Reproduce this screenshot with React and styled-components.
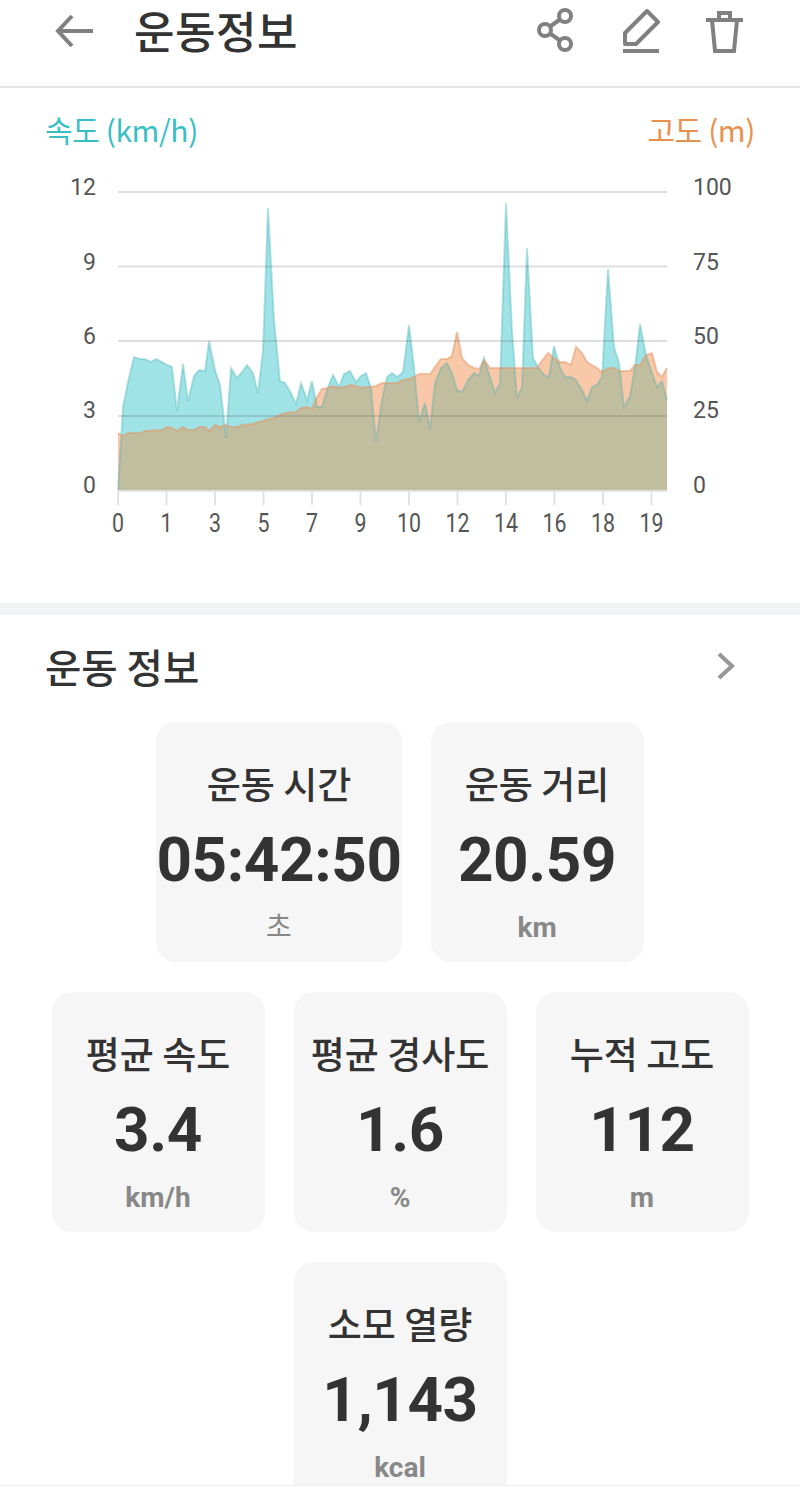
import React from 'react';
import styled, { createGlobalStyle } from 'styled-components';

const GlobalStyle = createGlobalStyle`
  html, body {
    margin: 0;
    padding: 0;
    background-color: #ffffff;
    overflow: hidden;
  }
  body {
    font-family: 'Noto Sans CJK KR', 'Noto Sans', sans-serif;
  }
`;

const Page = styled.div`
  width: 800px;
  height: 1511px;
  display: flex;
  flex-direction: column;
  overflow: hidden;
`;

const Content = styled.main`
  height: 1485px;
  flex-shrink: 0;
  overflow: hidden;
`;

const BottomEdge = styled.div`
  flex: 1;
  border-top: 1px solid #eeeeee;
`;

const Header = styled.header`
  height: 62px;
  padding: 0 55px 24px;
  display: flex;
  align-items: center;
  border-bottom: 2px solid #e4e4e4;
`;

const Title = styled.h1`
  margin: 0 0 2px 39px;
  font-size: 44px;
  font-weight: 500;
  letter-spacing: 0.5px;
  color: #333333;
  line-height: 54px;
`;

const Actions = styled.div`
  margin-left: auto;
  display: flex;
  gap: 44px;
`;

const Icon = styled.svg`
  display: block;
  fill: none;
  stroke: ${(props) => props.$stroke || '#808080'};
  stroke-width: 4;
`;

const ChartSection = styled.section`
  height: 515px;
`;

const LegendRow = styled.div`
  height: 82px;
  padding: 0 45px;
  box-sizing: border-box;
  display: flex;
  justify-content: space-between;
  align-items: flex-start;
`;

const Legend = styled.span`
  margin-top: 19px;
  font-size: 30px;
  line-height: 44px;
  font-weight: 400;
  letter-spacing: -0.4px;
  color: ${(props) => props.color};
`;

const ChartSvg = styled.svg`
  display: block;
`;

const GridLine = styled.line`
  stroke: rgba(90, 90, 90, 0.2);
  stroke-width: 2;
`;

const Tick = styled.line`
  stroke: #e2e2e2;
  stroke-width: 2;
`;

const AxisLabel = styled.text`
  font-family: Roboto, sans-serif;
  font-size: ${(props) => props.$size}px;
  fill: #555555;
`;

const Divider = styled.div`
  height: 12px;
  background-color: #f2f3f4;
`;

const SectionHead = styled.div`
  height: 107px;
  box-sizing: border-box;
  padding: 0 64px 6px 45px;
  display: flex;
  align-items: center;
  justify-content: space-between;
`;

const SectionTitle = styled.h2`
  margin: 0;
  font-size: 39.5px;
  font-weight: 500;
  color: #333333;
`;

const CardGrid = styled.div`
  padding: 0 50px;
  display: flex;
  flex-wrap: wrap;
  justify-content: center;
  gap: 30px 29px;
`;

const Card = styled.div`
  min-width: 213px;
  height: 240px;
  box-sizing: border-box;
  background-color: #f6f6f6;
  border-radius: 20px;
  display: flex;
  flex-direction: column;
  align-items: center;
`;

const CardLabel = styled.div`
  margin-top: 36px;
  font-size: 37px;
  line-height: 50px;
  font-weight: 500;
  color: #333333;
  white-space: nowrap;
`;

const CardValue = styled.div`
  margin-top: 17px;
  font-family: Roboto, sans-serif;
  font-size: 62px;
  line-height: 70px;
  letter-spacing: -0.4px;
  font-weight: 700;
  color: #333333;
  white-space: nowrap;
`;

const CardUnit = styled.div`
  margin-top: 13px;
  font-family: Roboto, 'Noto Sans CJK KR', sans-serif;
  font-size: 28px;
  line-height: 40px;
  font-weight: ${(props) => (props.$light ? 400 : 700)};
  color: #888888;
`;

// points are [x, y] in page pixels, the plot runs from y=192 to y=490
const SPEED = [
  [118, 490], [123, 407], [128, 382], [134, 357], [140, 359], [145, 359], [151, 362], [156, 359],
  [162, 362], [167, 365], [172, 367], [177, 411], [183, 364], [188, 401], [194, 376], [199, 370],
  [205, 371], [209, 341], [215, 370], [220, 385], [223, 410], [226, 438], [231, 368], [237, 378],
  [242, 372], [247, 365], [253, 373], [258, 393], [263, 350], [268, 208], [274, 320], [280, 381],
  [285, 383], [291, 393], [296, 404], [301, 383], [307, 400], [312, 381], [317, 407], [322, 407],
  [328, 387], [333, 375], [339, 387], [344, 374], [350, 371], [356, 382], [361, 376], [366, 373],
  [371, 388], [376, 442], [382, 400], [387, 377], [392, 373], [397, 377], [403, 372], [409, 325],
  [414, 367], [419, 422], [425, 403], [430, 429], [435, 383], [441, 368], [447, 363], [452, 373],
  [457, 390], [462, 392], [468, 380], [474, 373], [479, 376], [484, 358], [490, 377], [495, 393],
  [500, 383], [506, 203], [512, 330], [517, 398], [522, 387], [527, 248], [533, 358], [538, 367],
  [544, 375], [549, 377], [554, 346], [560, 368], [565, 377], [571, 377], [576, 380], [582, 390],
  [587, 401], [592, 387], [597, 385], [602, 377], [608, 269], [614, 347], [619, 363], [624, 407],
  [630, 396], [635, 367], [640, 324], [646, 355], [652, 373], [657, 387], [662, 381], [667, 400],
];

const ALTITUDE = [
  [118, 433], [123, 436], [128, 433], [140, 433], [145, 431], [162, 430], [167, 427], [172, 428],
  [177, 431], [183, 427], [188, 430], [194, 430], [199, 427], [205, 427], [209, 431], [215, 425],
  [220, 427], [226, 425], [231, 427], [237, 427], [242, 425], [253, 424], [258, 422], [263, 421],
  [268, 419], [274, 418], [280, 415], [285, 413], [296, 412], [301, 408], [307, 407], [312, 409],
  [317, 397], [322, 389], [328, 388], [333, 386], [339, 388], [344, 387], [350, 385], [356, 386],
  [361, 388], [366, 387], [371, 387], [376, 386], [382, 383], [397, 383], [403, 380], [409, 379],
  [414, 377], [419, 374], [430, 374], [435, 367], [441, 359], [447, 359], [452, 356], [457, 332],
  [462, 358], [468, 365], [474, 368], [479, 369], [484, 360], [490, 368], [537, 368], [541, 362],
  [548, 353], [554, 358], [560, 362], [565, 362], [571, 365], [576, 347], [582, 353], [587, 362],
  [592, 365], [597, 368], [602, 372], [608, 368], [614, 368], [619, 371], [630, 371], [635, 365],
  [640, 365], [646, 355], [652, 353], [657, 372], [662, 377], [667, 368],
];

const BASE_Y = 490;
const LEFT_X = 118;
const RIGHT_X = 667;

const GRID_Y = [192, 266.5, 341, 416];
const LEFT_AXIS = [[12, 187], [9, 262], [6, 336], [3, 410], [0, 485]];
const RIGHT_AXIS = [[100, 187], [75, 262], [50, 336], [25, 410], [0, 485]];
const X_AXIS = ['0', '1', '3', '5', '7', '9', '10', '12', '14', '16', '18', '19'];

const toLine = (points) => points.map(([x, y]) => `${x},${y}`).join(' ');
const toArea = (points) => `${LEFT_X},${BASE_Y} ${toLine(points)} ${RIGHT_X},${BASE_Y}`;

const STATS = [
  { label: '운동 시간', value: '05:42:50', unit: '초', light: true },
  { label: '운동 거리', value: '20.59', unit: 'km' },
  { label: '평균 속도', value: '3.4', unit: 'km/h' },
  { label: '평균 경사도', value: '1.6', unit: '%' },
  { label: '누적 고도', value: '112', unit: 'm' },
  { label: '소모 열량', value: '1,143', unit: 'kcal' },
];

const SpeedChart = () => (
  <ChartSvg width="800" height="433" viewBox="0 170 800 433">
    <defs>
      <clipPath id="speed-area">
        <polygon points={toArea(SPEED)} />
      </clipPath>
    </defs>
    <polygon points={toArea(SPEED)} fill="#9fe3e6" />
    <polygon points={toArea(ALTITUDE)} fill="#f9c8a8" />
    {/* where the two series overlap */}
    <polygon points={toArea(ALTITUDE)} fill="#c1bd9f" clipPath="url(#speed-area)" />
    <polyline points={toLine(SPEED)} fill="none" stroke="rgba(70, 175, 180, 0.35)" strokeWidth="2" />
    <polyline points={toLine(ALTITUDE)} fill="none" stroke="rgba(225, 150, 100, 0.5)" strokeWidth="2" />
    {GRID_Y.map((y) => (
      <GridLine key={y} x1={LEFT_X} x2={RIGHT_X} y1={y} y2={y} />
    ))}
    <Tick x1={LEFT_X} x2={RIGHT_X} y1={491} y2={491} />
    {X_AXIS.map((label, i) => {
      const x = LEFT_X + i * 48.5;
      return (
        <React.Fragment key={i}>
          <Tick x1={x} x2={x} y1={492} y2={505} />
          <AxisLabel
            $size={25}
            x={x}
            y={532}
            textAnchor="middle"
            textLength={label.length * 12}
            lengthAdjust="spacingAndGlyphs"
          >
            {label}
          </AxisLabel>
        </React.Fragment>
      );
    })}
    {LEFT_AXIS.map(([label, y]) => (
      <AxisLabel key={label} $size={23} x={96} y={y + 8} textAnchor="end">
        {label}
      </AxisLabel>
    ))}
    {RIGHT_AXIS.map(([label, y]) => (
      <AxisLabel key={label} $size={23} x={693} y={y + 8}>
        {label}
      </AxisLabel>
    ))}
  </ChartSvg>
);

const App = () => (
  <>
    <GlobalStyle />
    <Page>
      <Content>
        <Header>
          <Icon width="40" height="40" viewBox="0 0 40 40">
            <path d="M38 20H3M17 5L3 20l14 15" />
          </Icon>
          <Title>운동정보</Title>
          <Actions>
            <Icon width="40" height="48" viewBox="0 0 40 48">
              <circle cx="28" cy="9" r="6" />
              <circle cx="8" cy="23" r="6" />
              <circle cx="28" cy="37" r="6" />
              <path d="M13 19.500L23 12.500M13 26.500L23 33.500" />
            </Icon>
            <Icon width="40" height="48" viewBox="0 0 40 48">
              <path d="M4 37V26L26 4l11 11-22 22z" strokeLinejoin="round" />
              <path d="M2 44h36" />
            </Icon>
            <Icon width="40" height="48" viewBox="0 0 40 48">
              <path d="M1 13h37M7 13l3 31h19l3-31M14 13V6h11v7" />
            </Icon>
          </Actions>
        </Header>
        <ChartSection>
          <LegendRow>
            <Legend color="#38bfc6">속도 (km/h)</Legend>
            <Legend color="#e8914f">고도 (m)</Legend>
          </LegendRow>
          <SpeedChart />
        </ChartSection>
        <Divider />
        <SectionHead>
          <SectionTitle>운동 정보</SectionTitle>
          <Icon width="20" height="30" viewBox="0 0 20 30" $stroke="#969696">
            <path d="M3 3l13 12L3 27" />
          </Icon>
        </SectionHead>
        <CardGrid>
          {STATS.map((stat) => (
            <Card key={stat.label}>
              <CardLabel>{stat.label}</CardLabel>
              <CardValue>{stat.value}</CardValue>
              <CardUnit $light={stat.light}>{stat.unit}</CardUnit>
            </Card>
          ))}
        </CardGrid>
      </Content>
      <BottomEdge />
    </Page>
  </>
);

export default App;
